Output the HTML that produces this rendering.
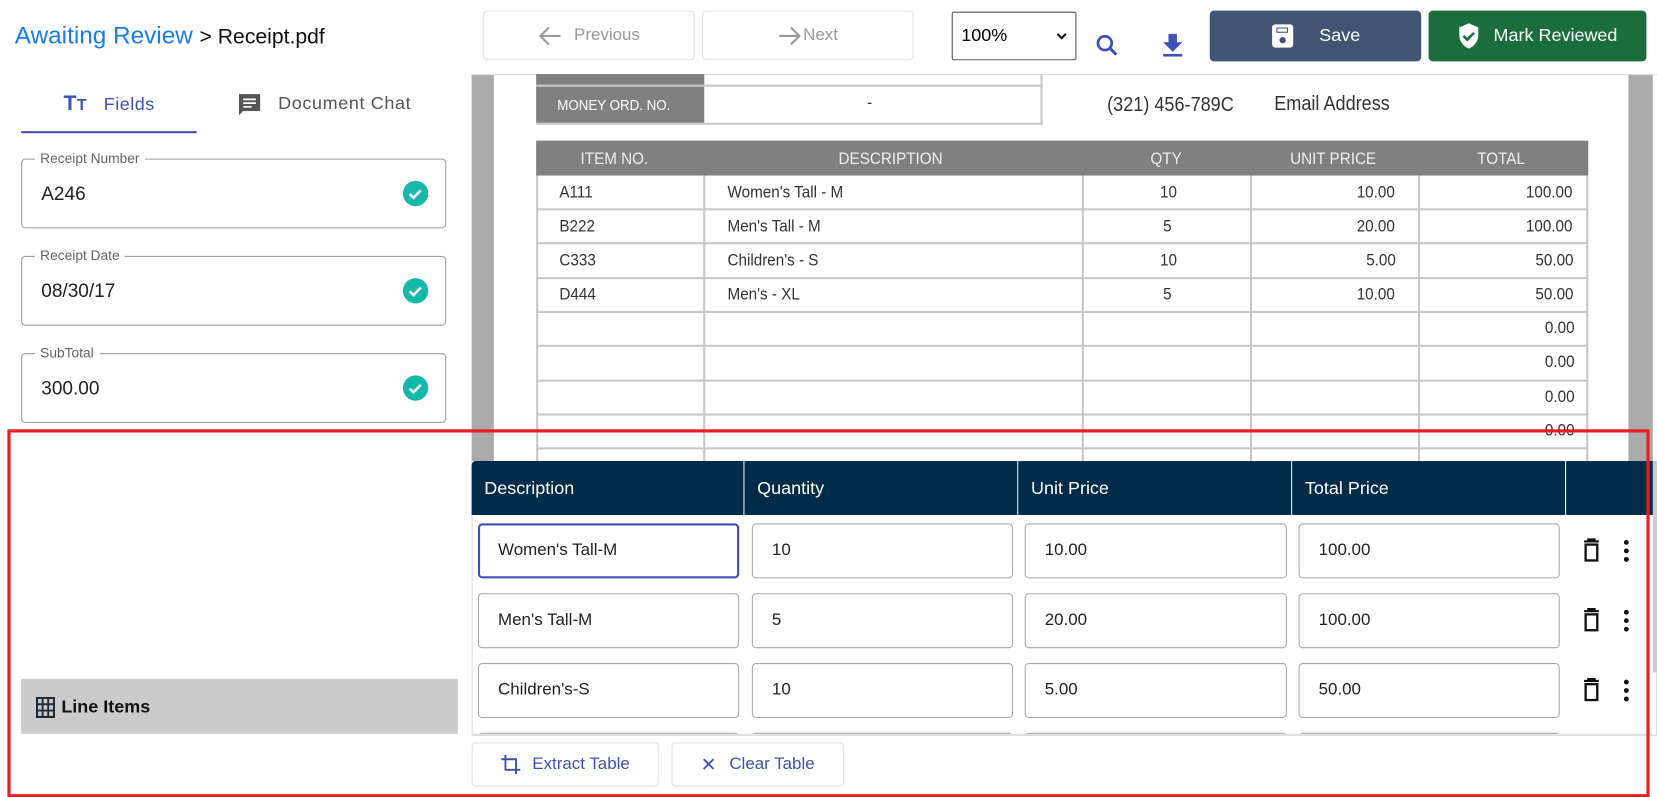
<!DOCTYPE html>
<html><head><meta charset="utf-8">
<style>
html,body{margin:0;padding:0;width:1657px;height:797px;overflow:hidden;background:#fff;font-family:"Liberation Sans",sans-serif;}
#w{position:absolute;left:0;top:0;width:1567px;height:754px;transform:scale(1.05744);transform-origin:0 0;}
.a{position:absolute;}
.btn{position:absolute;box-sizing:border-box;border:1px solid #e0e0e0;border-radius:4px;background:#fff;display:flex;align-items:center;justify-content:center;font-size:16px;}
.fld{position:absolute;left:20px;width:402px;height:66px;box-sizing:border-box;border:1px solid #9e9e9e;border-radius:4px;}
.fld .l{position:absolute;left:12px;top:-9px;background:#fff;padding:0 5px;font-size:13px;color:#666;}
.fld .v{position:absolute;left:18px;top:22px;font-size:18px;color:#222;}
.fld .c{position:absolute;right:16px;top:20px;width:24px;height:24px;border-radius:50%;background:#16b8a9;}
.pt{position:absolute;font-size:16px;color:#333;transform:scaleX(0.9);transform-origin:0 0;}
.hl{position:absolute;height:2px;background:#c8c8c8;}
.vl{position:absolute;width:2px;background:#c8c8c8;}
.th{position:absolute;top:436px;height:51px;background:#002b49;color:#fff;font-size:17px;line-height:51px;box-sizing:border-box;padding-left:12px;border-right:1px solid #fff;}
.in{position:absolute;height:52px;box-sizing:border-box;border:1px solid #a8a8a8;border-radius:4px;font-size:16px;color:#222;line-height:50px;padding-left:18px;background:#fff;}
</style></head><body><div id="w">
<div class="a" style="left:14px;top:20px;font-size:23px;color:#1a7cf0;">Awaiting Review <span style="color:#111;font-size:20px;">&gt; Receipt.pdf</span></div>
<div class="btn" style="left:457px;top:10px;width:200px;height:47px;color:#999;"><svg width="22" height="20" viewBox="0 0 22 20" style="margin-right:12px"><path d="M21 10H3M10 2L2 10l8 8" fill="none" stroke="#999" stroke-width="2"/></svg>Previous</div>
<div class="btn" style="left:664px;top:10px;width:200px;height:47px;color:#999;"><svg width="22" height="20" viewBox="0 0 22 20" style="margin-right:2px"><path d="M1 10h18M12 2l8 8-8 8" fill="none" stroke="#999" stroke-width="2"/></svg>Next</div>
<div class="a" style="left:900px;top:11px;width:118px;height:46px;box-sizing:border-box;border:1px solid #555;border-radius:2px;font-size:17px;line-height:44px;padding-left:8px;">100%<svg style="position:absolute;right:8px;top:19px" width="10" height="7" viewBox="0 0 10 7"><path d="M1 1l4 4 4-4" fill="none" stroke="#111" stroke-width="2"/></svg></div>
<svg class="a" style="left:1034px;top:30px" width="26" height="26" viewBox="0 0 24 24"><circle cx="10" cy="10" r="6" fill="none" stroke="#3f51b5" stroke-width="2.4"/><path d="M14.5 14.5L20 20" stroke="#3f51b5" stroke-width="2.6"/></svg>
<svg class="a" style="left:1098px;top:30px" width="22" height="24" viewBox="0 0 22 24"><path d="M7 2h8v8h5l-9 9-9-9h5z" fill="#3f51b5"/><rect x="2" y="21" width="18" height="2.5" fill="#3f51b5"/></svg>
<div class="a" style="left:1144px;top:10px;width:200px;height:48px;background:#415474;border-radius:4px;color:#fff;font-size:17px;display:flex;align-items:center;justify-content:center;">
<svg width="22" height="24" viewBox="0 0 22 24" style="margin-right:24px"><rect x="1" y="1" width="20" height="22" rx="3" fill="#fff"/><rect x="5" y="4" width="11" height="5" fill="#415474"/><rect x="6" y="5" width="9" height="3" fill="#fff"/><circle cx="11" cy="16" r="3" fill="#415474"/></svg>Save</div>
<div class="a" style="left:1351px;top:10px;width:206px;height:48px;background:#1b6e3c;border-radius:4px;color:#fff;font-size:17px;display:flex;align-items:center;justify-content:center;">
<svg width="22" height="26" viewBox="0 0 22 26" style="margin-right:12px"><path d="M11 1L2 5v7c0 6 4 11 9 13 5-2 9-7 9-13V5z" fill="#fff"/><path d="M6 13l3.5 3.5L16 10" fill="none" stroke="#1b6e3c" stroke-width="2.4"/></svg>Mark Reviewed</div>
<div class="a" style="left:446px;top:70px;width:1121px;height:1px;background:#e0e0e0;"></div>
<div class="a" style="left:60px;top:87px;font-size:17px;color:#3f51b5;letter-spacing:0.5px;"><b style="font-size:20px;">T<span style="font-size:15px">T</span></b>&nbsp;&nbsp; Fields</div>
<svg class="a" style="left:224px;top:87px" width="24" height="24" viewBox="0 0 24 24"><path d="M2 2h20v16H6l-4 4z" fill="#555"/><path d="M6 7h12M6 10.5h12M6 14h8" stroke="#fff" stroke-width="1.6"/></svg>
<div class="a" style="left:263px;top:88px;font-size:17px;color:#555;letter-spacing:0.6px;">Document Chat</div>
<div class="a" style="left:20px;top:124px;width:166px;height:2px;background:#3f51b5;"></div>
<div class="fld" style="top:150px"><div class="l">Receipt Number</div><div class="v">A246</div><div class="c"><svg width="24" height="24"><path d="M6.5 12.5l3.5 3.5 7-7" fill="none" stroke="#fff" stroke-width="2.4"/></svg></div></div>
<div class="fld" style="top:242px"><div class="l">Receipt Date</div><div class="v">08/30/17</div><div class="c"><svg width="24" height="24"><path d="M6.5 12.5l3.5 3.5 7-7" fill="none" stroke="#fff" stroke-width="2.4"/></svg></div></div>
<div class="fld" style="top:334px"><div class="l">SubTotal</div><div class="v">300.00</div><div class="c"><svg width="24" height="24"><path d="M6.5 12.5l3.5 3.5 7-7" fill="none" stroke="#fff" stroke-width="2.4"/></svg></div></div>
<div class="a" style="left:446px;top:71px;width:21px;height:366px;background:#aaa;"></div>
<div class="a" style="left:1540px;top:71px;width:23px;height:366px;background:#aaa;"></div>
<div class="a" style="left:507px;top:70px;width:159px;height:47px;background:#808080;"></div>
<div class="a" style="left:507px;top:80px;width:478px;height:2px;background:#c8c8c8;"></div>
<div class="a" style="left:507px;top:116px;width:478px;height:2px;background:#c8c8c8;"></div>
<div class="vl" style="left:984px;top:70px;height:48px;"></div>
<div class="pt" style="left:527px;top:91px;color:#fff;font-size:14px;">MONEY ORD. NO.</div>
<div class="pt" style="left:820px;top:89px;">-</div>
<div class="pt" style="left:1047px;top:89px;font-size:19px;">(321) 456-789C</div>
<div class="pt" style="left:1205px;top:88px;font-size:19px;">Email Address</div>
<div class="a" style="left:507px;top:133px;width:995px;height:33px;background:#808080;"></div>
<div class="pt" style="left:549px;top:142px;color:#eee;">ITEM NO.</div>
<div class="pt" style="left:793px;top:142px;color:#eee;">DESCRIPTION</div>
<div class="pt" style="left:1088px;top:142px;color:#eee;">QTY</div>
<div class="pt" style="left:1220px;top:142px;color:#eee;">UNIT PRICE</div>
<div class="pt" style="left:1397px;top:142px;color:#eee;">TOTAL</div>
<div class="vl" style="left:507px;top:166px;height:270px;"></div>
<div class="vl" style="left:665px;top:166px;height:270px;"></div>
<div class="vl" style="left:1023px;top:166px;height:270px;"></div>
<div class="vl" style="left:1182px;top:166px;height:270px;"></div>
<div class="vl" style="left:1341px;top:166px;height:270px;"></div>
<div class="vl" style="left:1500px;top:166px;height:270px;"></div>
<div class="hl" style="left:507px;top:197px;width:995px;"></div>
<div class="hl" style="left:507px;top:229px;width:995px;"></div>
<div class="hl" style="left:507px;top:262px;width:995px;"></div>
<div class="hl" style="left:507px;top:294px;width:995px;"></div>
<div class="hl" style="left:507px;top:326px;width:995px;"></div>
<div class="hl" style="left:507px;top:359px;width:995px;"></div>
<div class="hl" style="left:507px;top:391px;width:995px;"></div>
<div class="hl" style="left:507px;top:423px;width:995px;"></div>
<div class="pt" style="left:529px;top:174px;">A111</div><div class="pt" style="left:688px;top:174px;">Women's Tall - M</div><div class="pt" style="left:1097px;top:174px;">10</div><div class="pt" style="left:1283px;top:174px;">10.00</div><div class="pt" style="left:1443px;top:174px;">100.00</div>
<div class="pt" style="left:529px;top:206px;">B222</div><div class="pt" style="left:688px;top:206px;">Men's Tall - M</div><div class="pt" style="left:1100px;top:206px;">5</div><div class="pt" style="left:1283px;top:206px;">20.00</div><div class="pt" style="left:1443px;top:206px;">100.00</div>
<div class="pt" style="left:529px;top:238px;">C333</div><div class="pt" style="left:688px;top:238px;">Children's - S</div><div class="pt" style="left:1097px;top:238px;">10</div><div class="pt" style="left:1292px;top:238px;">5.00</div><div class="pt" style="left:1452px;top:238px;">50.00</div>
<div class="pt" style="left:529px;top:270px;">D444</div><div class="pt" style="left:688px;top:270px;">Men's - XL</div><div class="pt" style="left:1100px;top:270px;">5</div><div class="pt" style="left:1283px;top:270px;">10.00</div><div class="pt" style="left:1452px;top:270px;">50.00</div>
<div class="pt" style="left:1461px;top:302px;">0.00</div>
<div class="pt" style="left:1461px;top:334px;">0.00</div>
<div class="pt" style="left:1461px;top:367px;">0.00</div>
<div class="pt" style="left:1461px;top:399px;">0.00</div>
<div class="a" style="left:446px;top:436px;width:1121px;height:260px;background:#fff;border:1px solid #ddd;border-top:none;box-sizing:border-box;"></div>
<div class="a" style="left:1563px;top:436px;width:4px;height:200px;background:#ccc;"></div>
<div class="th" style="left:446px;width:258px;border-radius:4px 0 0 0;">Description</div>
<div class="th" style="left:704px;width:259px;">Quantity</div>
<div class="th" style="left:963px;width:259px;">Unit Price</div>
<div class="th" style="left:1222px;width:259px;">Total Price</div>
<div class="th" style="left:1481px;width:82px;border-right:none;"></div>
<div class="a" style="left:446px;top:487px;width:1117px;height:208px;overflow:hidden;">
<div class="in" style="left:6px;top:8px;width:247px;border:2px solid #3f51b5;padding-left:17px;line-height:48px;">Women's Tall-M</div>
<div class="in" style="left:265px;top:8px;width:247px;">10</div>
<div class="in" style="left:523px;top:8px;width:248px;">10.00</div>
<div class="in" style="left:782px;top:8px;width:247px;">100.00</div>
<div class="in" style="left:6px;top:74px;width:247px;">Men's Tall-M</div>
<div class="in" style="left:265px;top:74px;width:247px;">5</div>
<div class="in" style="left:523px;top:74px;width:248px;">20.00</div>
<div class="in" style="left:782px;top:74px;width:247px;">100.00</div>
<div class="in" style="left:6px;top:140px;width:247px;">Children's-S</div>
<div class="in" style="left:265px;top:140px;width:247px;">10</div>
<div class="in" style="left:523px;top:140px;width:248px;">5.00</div>
<div class="in" style="left:782px;top:140px;width:247px;">50.00</div>
<div class="in" style="left:6px;top:206px;width:247px;"></div>
<div class="in" style="left:265px;top:206px;width:247px;"></div>
<div class="in" style="left:523px;top:206px;width:248px;"></div>
<div class="in" style="left:782px;top:206px;width:247px;"></div>
</div>
<div class="a" style="left:446px;top:694px;width:1117px;height:1px;background:#ddd;"></div>
<svg class="a" style="left:1495px;top:509px" width="20" height="24" viewBox="0 0 20 24"><path d="M3 3h14M7 3V1h6v2" stroke="#111" stroke-width="2" fill="none"/><rect x="4.5" y="6" width="11" height="15" fill="none" stroke="#111" stroke-width="2.2"/></svg>
<svg class="a" style="left:1495px;top:575px" width="20" height="24" viewBox="0 0 20 24"><path d="M3 3h14M7 3V1h6v2" stroke="#111" stroke-width="2" fill="none"/><rect x="4.5" y="6" width="11" height="15" fill="none" stroke="#111" stroke-width="2.2"/></svg>
<svg class="a" style="left:1495px;top:641px" width="20" height="24" viewBox="0 0 20 24"><path d="M3 3h14M7 3V1h6v2" stroke="#111" stroke-width="2" fill="none"/><rect x="4.5" y="6" width="11" height="15" fill="none" stroke="#111" stroke-width="2.2"/></svg>
<svg class="a" style="left:1534px;top:510px" width="8" height="22"><circle cx="4" cy="3" r="2.3" fill="#111"/><circle cx="4" cy="11" r="2.3" fill="#111"/><circle cx="4" cy="19" r="2.3" fill="#111"/></svg>
<svg class="a" style="left:1534px;top:576px" width="8" height="22"><circle cx="4" cy="3" r="2.3" fill="#111"/><circle cx="4" cy="11" r="2.3" fill="#111"/><circle cx="4" cy="19" r="2.3" fill="#111"/></svg>
<svg class="a" style="left:1534px;top:642px" width="8" height="22"><circle cx="4" cy="3" r="2.3" fill="#111"/><circle cx="4" cy="11" r="2.3" fill="#111"/><circle cx="4" cy="19" r="2.3" fill="#111"/></svg>
<div class="btn" style="left:446px;top:702px;width:177px;height:42px;color:#3f51b5;">
<svg width="20" height="20" viewBox="0 0 20 20" style="margin-right:10px"><path d="M5 1v14h14M1 5h14v14" fill="none" stroke="#3f51b5" stroke-width="1.8"/></svg>Extract Table</div>
<div class="btn" style="left:635px;top:702px;width:163px;height:42px;color:#3f51b5;"><span style="font-size:18px;margin-right:12px;">✕</span>Clear Table</div>
<div class="a" style="left:20px;top:642px;width:413px;height:52px;background:#cbcbcb;"></div>
<svg class="a" style="left:34px;top:659px" width="18" height="20" viewBox="0 0 18 20"><rect x="1" y="1" width="16" height="18" fill="none" stroke="#1d2a3a" stroke-width="2"/><path d="M6.3 1v18M11.6 1v18M1 7h16M1 13h16" stroke="#1d2a3a" stroke-width="1.8"/></svg>
<div class="a" style="left:58px;top:659px;font-size:17px;font-weight:bold;color:#111;">Line Items</div>
<div class="a" style="left:7px;top:406px;width:1553px;height:348px;box-sizing:border-box;border:3px solid #ed1c24;"></div>
</div></body></html>
